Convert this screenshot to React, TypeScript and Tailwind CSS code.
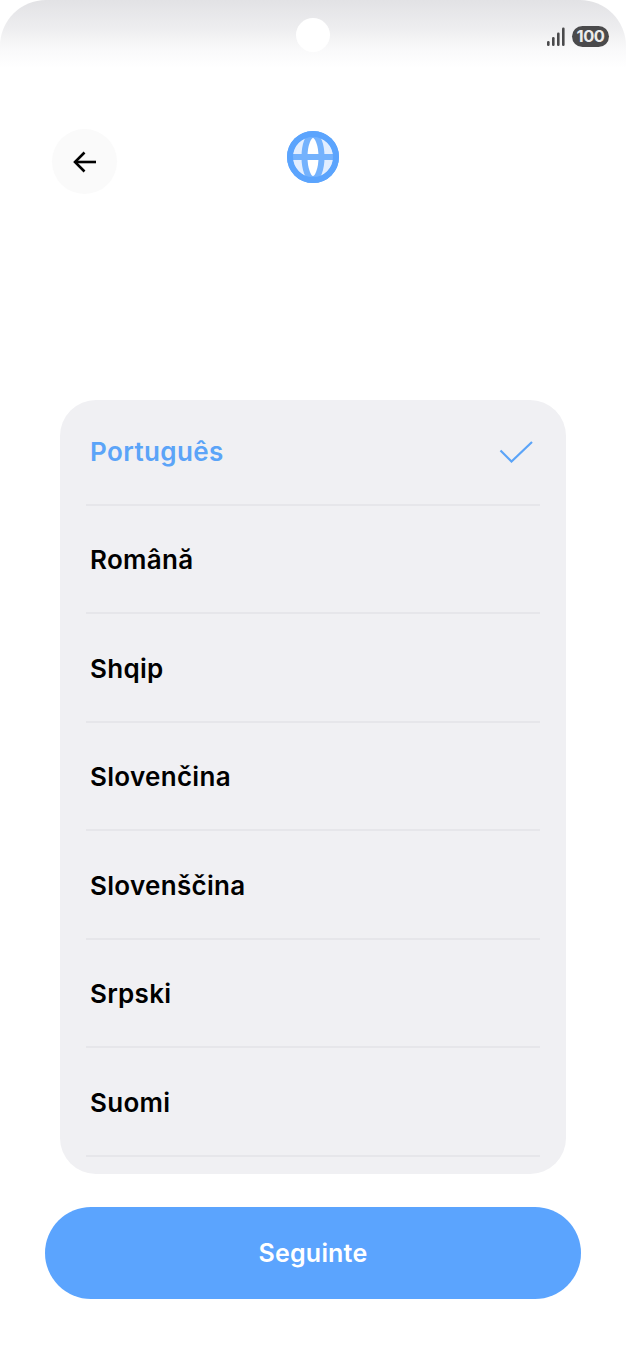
import React from 'react';

const languages = ['Română', 'Shqip', 'Slovenčina', 'Slovenščina', 'Srpski', 'Suomi'];

function SignalBars() {
  return (
    <svg width="19" height="20" viewBox="0 0 19 20" fill="#4a4a4c">
      <rect x="0" y="14" width="2.6" height="5" rx="1.2" />
      <rect x="5" y="10" width="2.6" height="9" rx="1.2" />
      <rect x="10" y="5.5" width="2.6" height="13.5" rx="1.2" />
      <rect x="15" y="0.5" width="2.6" height="18.5" rx="1.2" />
    </svg>
  );
}

function Globe() {
  return (
    <svg width="52" height="52" viewBox="0 0 52 52">
      <circle cx="26" cy="26" r="26" fill="#5ba4fd" />
      <circle cx="26" cy="26" r="20.5" fill="#e2eeff" />
      <ellipse cx="26" cy="26" rx="8.5" ry="22" fill="#fff" stroke="#74b2fd" strokeWidth="6" />
      <rect x="4" y="23" width="44" height="6" fill="#74b2fd" />
      <circle cx="26" cy="26" r="23" fill="none" stroke="#5ba4fd" strokeWidth="6" />
    </svg>
  );
}

export default function App() {
  return (
    <div className="w-[626px] h-[1358px] bg-white overflow-hidden font-['Inter',sans-serif]">
      {/* Status bar */}
      <div className="relative h-[68px] mb-[-2px] rounded-t-[46px] bg-[linear-gradient(to_bottom,#e2e2e5_0%,#ededef_40%,#f9f9fa_72%,#ffffff_100%)] flex justify-end items-start pt-[26px] pr-[17px]">
        <div className="absolute left-[296px] top-[18px] w-[34px] h-[34px] rounded-full bg-white" />
        <div className="flex items-center gap-[6px]">
          <SignalBars />
          <div className="w-[37px] h-[21px] rounded-full bg-[#4a4a4c] text-[#ececec] text-[16.5px] font-bold tracking-[-0.5px] leading-[21px] text-center">
            100
          </div>
        </div>
      </div>

      {/* Header */}
      <div className="mt-[63px] ml-[52px] h-[65px] flex items-start">
        <button className="w-[65px] h-[65px] rounded-full bg-[#fafafa] flex items-center justify-center">
          <svg width="24" height="22" viewBox="0 0 24 22" fill="none" stroke="#000" strokeWidth="2.6">
            <path d="M23 11H2" />
            <path d="M11.5 1.5L2 11l9.5 9.5" />
          </svg>
        </button>
        <div className="ml-[170px] mt-[2px]">
          <Globe />
        </div>
      </div>

      {/* Language list */}
      <div className="mt-[206px] mx-[60px] h-[774px] rounded-[36px] bg-[#f0f0f3] px-[26px] overflow-hidden">
        <div className="h-[105.5px] border-b-2 border-[#e6e6ea] flex items-center justify-between pl-[4px] pr-[7px]">
          <span className="text-[26px] font-semibold tracking-[0.4px] text-[#5ba4f8]">Português</span>
          <svg width="34" height="22" viewBox="0 0 34 22" fill="none" stroke="#5ba4f8" strokeWidth="2.2">
            <path d="M1.5 9.5L12.5 20.5L33 1" />
          </svg>
        </div>
        {languages.map((name) => (
          <div key={name} className="h-[108.5px] border-b-2 border-[#e6e6ea] flex items-center pl-[4px] pt-[2px]">
            <span className="text-[26px] font-semibold tracking-[0.3px] text-black">{name}</span>
          </div>
        ))}
      </div>

      {/* Next */}
      <button className="block mt-[33px] ml-[45px] w-[536px] h-[92px] pt-[2px] rounded-full bg-[#5ba4fe] text-white text-[25px] font-semibold tracking-[0.2px]">
        Seguinte
      </button>
    </div>
  );
}
